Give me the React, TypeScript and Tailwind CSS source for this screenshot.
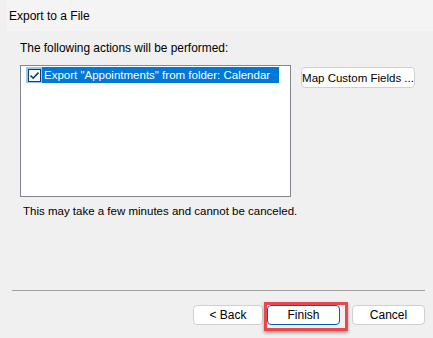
export default function App() {
  const font = { fontFamily: '"Liberation Sans", Arial, sans-serif' };

  return (
    <div
      className="relative flex h-[338px] w-[433px] flex-col overflow-hidden bg-[#f0f0f0] text-[11.5px] text-[#000]"
      style={font}
    >
      {/* wizard header */}
      <div className="ml-[7px] flex h-[31px] items-center bg-[#f4f4f4] pl-[2px] text-[12px] leading-[16px]">
        Export to a File
      </div>

      <div className="pl-[20px]">
        <div className="mt-[9px] whitespace-nowrap text-[11.9px] leading-[16px]">
          The following actions will be performed:
        </div>

        <div className="mt-[9px] flex items-start">
          <div className="h-[132px] w-[271px] border border-[#828790] bg-white pl-[5px] pt-[1px]">
            <div className="flex h-[16px] w-[253px] items-center">
              <div className="flex h-[16px] w-[16px] items-center justify-center bg-[#99c9ef]">
                <svg width="13" height="13" viewBox="0 0 13 13">
                  <rect x="0.5" y="0.5" width="12" height="12" fill="#f4f9fd" stroke="#1c3c64" />
                  <path d="M2.5 6.5 L5.2 9.2 L10.5 3.6" fill="none" stroke="#1c3c64" strokeWidth="1.6" />
                </svg>
              </div>
              <div className="flex h-[16px] flex-1 items-center whitespace-nowrap bg-[#0078d7] pl-[2px] leading-[16px] text-white">
                Export "Appointments" from folder: Calendar
              </div>
            </div>
          </div>

          <button className="ml-[10px] mt-[2px] h-[21px] w-[114px] whitespace-nowrap rounded-[4px] border border-[#d0d0d0] bg-white leading-[16px]">
            Map Custom Fields ...
          </button>
        </div>

        <div className="mt-[6px] whitespace-nowrap pl-[3px] leading-[16px]">
          This may take a few minutes and cannot be canceled.
        </div>
      </div>

      <div className="flex-1" />

      {/* footer */}
      <div className="mr-[8px] ml-[12px] h-[1px] bg-[#a0a0a0]" />
      <div className="mb-[13px] mt-[14px] flex justify-end gap-[4px] pr-[8px]">
        <button className="h-[20px] w-[70px] rounded-[4px] border border-[#d0d0d0] bg-white text-[12px] leading-[16px]">
          &lt; Back
        </button>
        <button className="h-[20px] w-[73px] rounded-[4px] border border-[#005fb8] bg-white text-[12px] leading-[16px]">
          Finish
        </button>
        <button className="ml-[8px] h-[20px] w-[73px] rounded-[4px] border border-[#d0d0d0] bg-white text-[12px] leading-[16px]">
          Cancel
        </button>
      </div>

      {/* highlight around Finish */}
      <div className="pointer-events-none absolute left-[264px] top-[302px] h-[29px] w-[84px] border-[3px] border-[#e8474b] shadow-[0_2px_3px_rgba(0,0,0,0.35)]" />
    </div>
  );
}
